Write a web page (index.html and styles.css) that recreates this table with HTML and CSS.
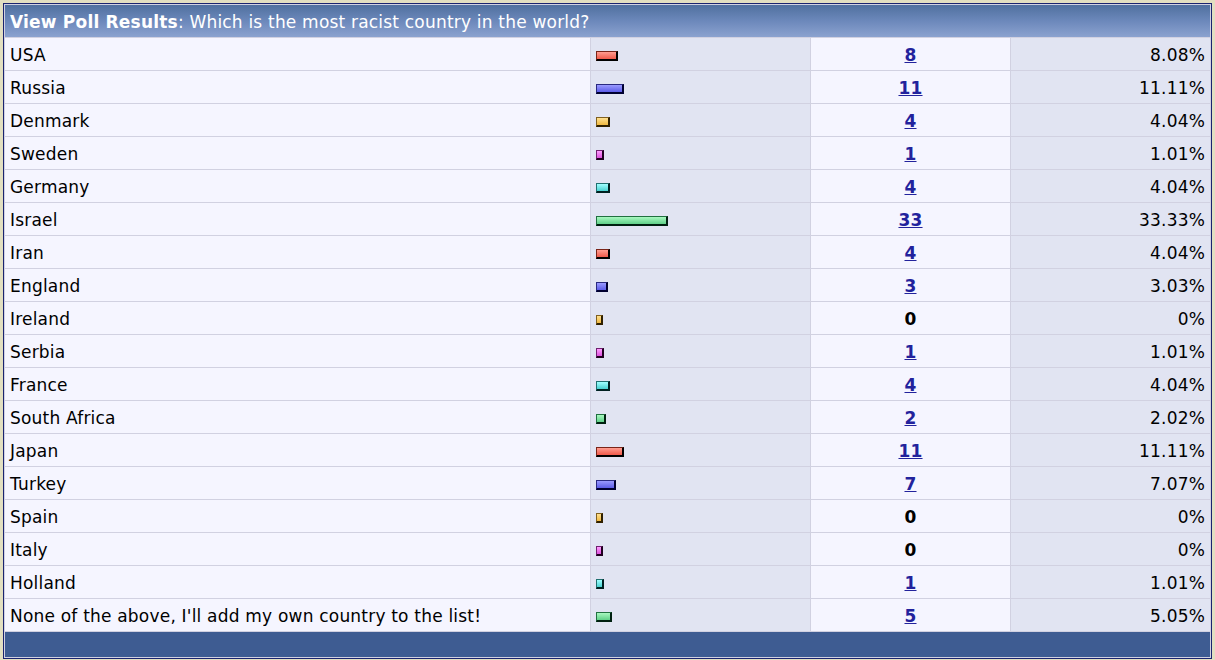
FILE: index.html
```html
<!DOCTYPE html>
<html>
<head>
<meta charset="utf-8">
<title>View Poll Results</title>
<link rel="stylesheet" href="styles.css">
</head>
<body>
<table class="poll">
  <colgroup>
    <col class="c-opt"><col class="c-bar"><col class="c-votes"><col class="c-pct">
  </colgroup>
  <thead>
    <tr><th colspan="4" class="thead"><strong>View Poll Results</strong>: Which is the most racist country in the world?</th></tr>
  </thead>
  <tbody>
    <tr><td class="alt1">USA</td><td class="alt2"><span class="bar b1" style="width:22px"></span></td><td class="alt1 votes"><a href="#">8</a></td><td class="alt2 pct">8.08%</td></tr>
    <tr><td class="alt1">Russia</td><td class="alt2"><span class="bar b2" style="width:28px"></span></td><td class="alt1 votes"><a href="#">11</a></td><td class="alt2 pct">11.11%</td></tr>
    <tr><td class="alt1">Denmark</td><td class="alt2"><span class="bar b3" style="width:14px"></span></td><td class="alt1 votes"><a href="#">4</a></td><td class="alt2 pct">4.04%</td></tr>
    <tr><td class="alt1">Sweden</td><td class="alt2"><span class="bar b4" style="width:8px"></span></td><td class="alt1 votes"><a href="#">1</a></td><td class="alt2 pct">1.01%</td></tr>
    <tr><td class="alt1">Germany</td><td class="alt2"><span class="bar b5" style="width:14px"></span></td><td class="alt1 votes"><a href="#">4</a></td><td class="alt2 pct">4.04%</td></tr>
    <tr><td class="alt1">Israel</td><td class="alt2"><span class="bar b6" style="width:72px"></span></td><td class="alt1 votes"><a href="#">33</a></td><td class="alt2 pct">33.33%</td></tr>
    <tr><td class="alt1">Iran</td><td class="alt2"><span class="bar b1" style="width:14px"></span></td><td class="alt1 votes"><a href="#">4</a></td><td class="alt2 pct">4.04%</td></tr>
    <tr><td class="alt1">England</td><td class="alt2"><span class="bar b2" style="width:12px"></span></td><td class="alt1 votes"><a href="#">3</a></td><td class="alt2 pct">3.03%</td></tr>
    <tr><td class="alt1">Ireland</td><td class="alt2"><span class="bar b3" style="width:7px"></span></td><td class="alt1 votes"><b>0</b></td><td class="alt2 pct">0%</td></tr>
    <tr><td class="alt1">Serbia</td><td class="alt2"><span class="bar b4" style="width:8px"></span></td><td class="alt1 votes"><a href="#">1</a></td><td class="alt2 pct">1.01%</td></tr>
    <tr><td class="alt1">France</td><td class="alt2"><span class="bar b5" style="width:14px"></span></td><td class="alt1 votes"><a href="#">4</a></td><td class="alt2 pct">4.04%</td></tr>
    <tr><td class="alt1">South Africa</td><td class="alt2"><span class="bar b6" style="width:10px"></span></td><td class="alt1 votes"><a href="#">2</a></td><td class="alt2 pct">2.02%</td></tr>
    <tr><td class="alt1">Japan</td><td class="alt2"><span class="bar b1" style="width:28px"></span></td><td class="alt1 votes"><a href="#">11</a></td><td class="alt2 pct">11.11%</td></tr>
    <tr><td class="alt1">Turkey</td><td class="alt2"><span class="bar b2" style="width:20px"></span></td><td class="alt1 votes"><a href="#">7</a></td><td class="alt2 pct">7.07%</td></tr>
    <tr><td class="alt1">Spain</td><td class="alt2"><span class="bar b3" style="width:7px"></span></td><td class="alt1 votes"><b>0</b></td><td class="alt2 pct">0%</td></tr>
    <tr><td class="alt1">Italy</td><td class="alt2"><span class="bar b4" style="width:7px"></span></td><td class="alt1 votes"><b>0</b></td><td class="alt2 pct">0%</td></tr>
    <tr><td class="alt1">Holland</td><td class="alt2"><span class="bar b5" style="width:8px"></span></td><td class="alt1 votes"><a href="#">1</a></td><td class="alt2 pct">1.01%</td></tr>
    <tr><td class="alt1">None of the above, I'll add my own country to the list!</td><td class="alt2"><span class="bar b6" style="width:16px"></span></td><td class="alt1 votes"><a href="#">5</a></td><td class="alt2 pct">5.05%</td></tr>
  </tbody>
  <tfoot>
    <tr><td colspan="4" class="tfoot"></td></tr>
  </tfoot>
</table>
</body>
</html>
```

FILE: styles.css
```css
html, body {
  margin: 0;
  padding: 0;
  background: #e2dfc1;
}
body {
  padding: 3px;
  font-family: "DejaVu Sans", Verdana, sans-serif;
  font-size: 17px;
  letter-spacing: 0.2px;
  color: #000;
}
.poll {
  width: 1209px;
  table-layout: fixed;
  border: 1px solid #1a2470;
  border-spacing: 1px;
  background: #d1d1e1;
}
.c-opt { width: 585px; }
.c-bar { width: 219px; }
.c-votes { width: 199px; }
.c-pct { width: 199px; }
.poll td, .poll th {
  height: 32px;
  padding: 1px 5px 0;
  box-sizing: border-box;
  vertical-align: middle;
  white-space: nowrap;
}
.thead {
  text-align: left;
  font-weight: normal;
  color: #fff;
  background: linear-gradient(to bottom, #50709f 0%, #6c88bb 50%, #8ba2cf 100%);
}
.thead strong { font-weight: bold; }
.alt1 { background: #f5f5ff; }
.alt2 { background: #e1e4f2; }
.votes { text-align: center; font-weight: bold; }
.votes a { color: #22229c; text-decoration: underline; }
.pct { text-align: right; }
.tfoot {
  background: #3e5c92;
}
.poll .tfoot { height: 25px; }
.bar {
  display: inline-block;
  height: 10px;
  box-sizing: border-box;
  vertical-align: middle;
  margin-top: 0;
  border: 1px solid;
  border-right-width: 2px;
  border-bottom-width: 2px;
}
.b1 { background: linear-gradient(#ff9c90, #f05a4a); border-color: #7a2418 #000 #000 #7a2418; }
.b2 { background: linear-gradient(#9a9aff, #5c5ce8); border-color: #2a2a80 #000030 #000030 #2a2a80; }
.b3 { background: linear-gradient(#ffe090, #f0b840); border-color: #806020 #302000 #302000 #806020; }
.b4 { background: linear-gradient(#ff9cff, #dc50dc); border-color: #702070 #200020 #200020 #702070; }
.b5 { background: linear-gradient(#a0ffff, #48d0d0); border-color: #207070 #002020 #002020 #207070; }
.b6 { background: linear-gradient(#a8f8c0, #60d088); border-color: #207040 #002010 #002010 #207040; }
```
